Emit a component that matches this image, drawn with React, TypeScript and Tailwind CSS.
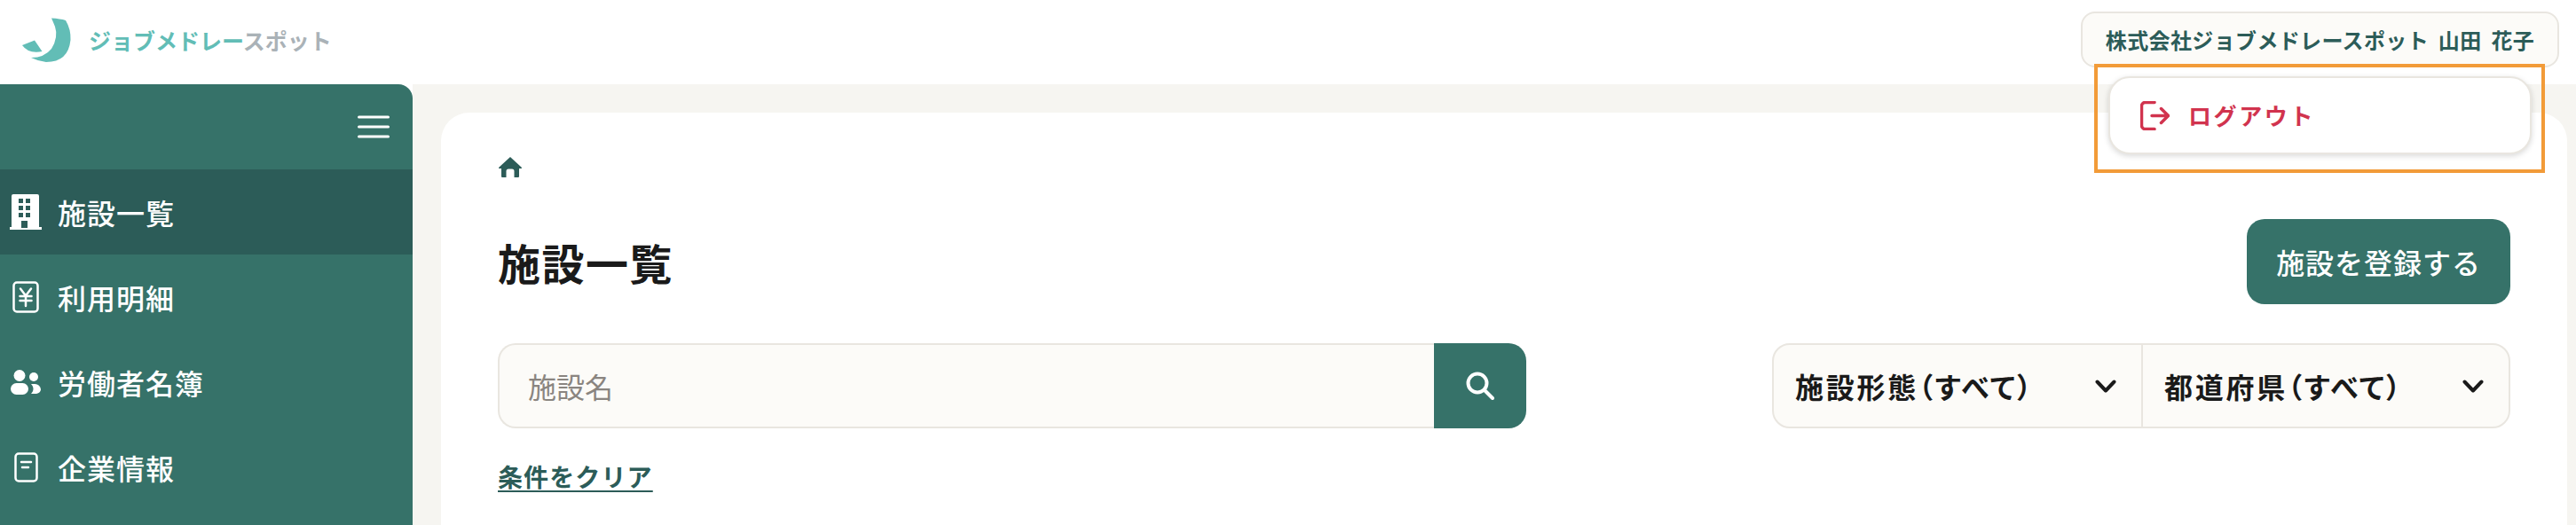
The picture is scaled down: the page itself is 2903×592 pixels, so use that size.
const font = "font-['Noto_Sans_CJK_JP','Liberation_Sans',sans-serif]"

function BuildingIcon() {
    return (
        <svg width="36" height="40" viewBox="0 0 36 40" fill="none">
            <path fillRule="evenodd" clipRule="evenodd" fill="#fff" d="M4 0h27a2 2 0 0 1 2 2v35h3v3H0v-3h2V2a2 2 0 0 1 2-2zM10 5v5h5V5zM18 5v5h5V5zM10 13v5h5v-5zM18 13v5h5v-5zM13 30v8h7v-8z" />
            <path fill="#2c5c58" d="M10 21h5v5h-5zM18 21h5v5h-5zM13 30h7v8h-7z" />
        </svg>
    )
}

function YenIcon() {
    return (
        <svg width="30" height="36" viewBox="0 0 30 36" fill="none" stroke="#fff" strokeWidth="2.500" strokeLinecap="round" strokeLinejoin="round">
            <rect x="1.500" y="1.500" width="27" height="33" rx="3.500" />
            <path d="M9 8.500l6 8 6-8M8.500 17h13M8.500 22h13M15 17v11" />
        </svg>
    )
}

function PeopleIcon() {
    return (
        <svg width="34" height="28" viewBox="0 0 34 28" fill="#fff">
            <circle cx="10" cy="6.500" r="6.500" />
            <circle cx="26" cy="8" r="5" />
            <rect x="0" y="15" width="20" height="13" rx="6.500" />
            <path d="M23 16h4.500a6.500 6.500 0 0 1 6.500 6c0 3-3 5-6.500 5H23c1.500-1.500 2.500-3.500 2.500-5.500s-1-4-2.500-5.500z" />
        </svg>
    )
}

function DocIcon() {
    return (
        <svg width="27" height="34" viewBox="0 0 27 34" fill="none" stroke="#fff" strokeWidth="2.500" strokeLinecap="round">
            <rect x="1.500" y="1.500" width="24" height="31" rx="3.500" />
            <path d="M8 11h11M9 17h7" />
        </svg>
    )
}

function NavItem({ icon, label, active }: { icon: React.ReactNode; label: string; active?: boolean }) {
    return (
        <div className={`h-[96px] flex items-center ${active ? 'bg-[#2c5c58]' : ''}`}>
            <div className="w-[58px] shrink-0 flex justify-center">{icon}</div>
            <span className="ml-[7px] text-[32px] leading-none tracking-[0.03em] font-medium text-white">{label}</span>
        </div>
    )
}

function Chevron() {
    return (
        <svg width="24" height="15" viewBox="0 0 24 15" fill="none" stroke="#1a1a1a" strokeWidth="4" strokeLinecap="round" strokeLinejoin="round">
            <path d="M2.500 2.500L12 12.500L21.500 2.500" />
        </svg>
    )
}

function FilterSelect({ label, className }: { label: string; className: string }) {
    return (
        <div className={`flex items-center justify-between ${className}`}>
            <span className="text-[32px] leading-none tracking-[0.085em] font-bold text-[#1a1a1a] [font-feature-settings:'palt']">{label}</span>
            <Chevron />
        </div>
    )
}

export default function App() {
    return (
        <div className={`${font} w-full h-[592px] overflow-hidden bg-white flex flex-col`}>
            <header className="h-[95px] shrink-0 bg-white flex justify-between">
                <div className="flex items-center pl-[25px] pb-[5px]">
                    <svg width="55" height="50" viewBox="25 20 55 50" fill="#62bdb6">
                        <path d="M58 20.500Q68 21 74 23Q80 33 79.500 45Q77 70 52 70Q43 69 35 65Q50 65 58 55Q66 42 62 30Q60 25 58 20.500Z" />
                        <path d="M25 51L39 45.500L47.500 58Q32 61 25 51Z" />
                    </svg>
                    <span className="ml-[20px] text-[25px] leading-none font-bold whitespace-nowrap">
                        <span className="text-[#62bdb6]">ジョブメドレー</span>
                        <span className="text-[#aab2b7]">スポット</span>
                    </span>
                </div>
                <div className="pt-[13px] pr-[19px]">
                    <div className="relative w-[539px] h-[63px] rounded-[16px] border-2 border-[#e9e6e0] bg-[#fcfbf8] flex items-center justify-center">
                        <span className="text-[24px] leading-none font-bold tracking-[0.015em] [word-spacing:5px] text-[#2c5c58] whitespace-nowrap">株式会社ジョブメドレースポット 山田 花子</span>
                        <div className="absolute z-10 left-[13px] top-[57px] w-[508px] h-[123px] border-[4px] border-[#f29b38] pl-[12px] pt-[10px]">
                            <div className="w-[477px] h-[88px] rounded-[24px] border-2 border-[#e9e6e0] bg-white shadow-[0_2px_6px_rgba(0,0,0,0.15)] flex items-center pl-[34px]">
                                <svg width="33" height="33" viewBox="0 0 33 33" fill="none" stroke="#d1334e" strokeWidth="3.500" strokeLinecap="round" strokeLinejoin="round">
                                    <path d="M16 1.500H6a4 4 0 0 0-4.500 4v22a4 4 0 0 0 4.500 4h10" />
                                    <path d="M13 16.500H31M23.500 8.500L31.500 16.500L23.500 24.500" />
                                </svg>
                                <span className="ml-[21px] text-[26px] leading-none font-bold tracking-[0.1em] text-[#d1334e]">ログアウト</span>
                            </div>
                        </div>
                    </div>
                </div>
            </header>

            <div className="flex-1 flex min-h-0">
                <aside className="w-[465px] shrink-0 bg-[#367269] rounded-tr-[16px]">
                    <div className="h-[96px] flex justify-end items-center pr-[26px]">
                        <svg width="36" height="26" viewBox="0 0 36 26" fill="none" stroke="#fff" strokeWidth="3" strokeLinecap="round">
                            <path d="M1.500 2h33M1.500 13h33M1.500 24h33" />
                        </svg>
                    </div>
                    <NavItem icon={<BuildingIcon />} label="施設一覧" active />
                    <NavItem icon={<YenIcon />} label="利用明細" />
                    <NavItem icon={<PeopleIcon />} label="労働者名簿" />
                    <NavItem icon={<DocIcon />} label="企業情報" />
                </aside>

                <main className="flex-1 min-w-0 bg-[#f6f5f1] pt-[32px] pl-[32px] pr-[10px]">
                    <div className="h-[600px] bg-white rounded-t-[32px] pt-[50px] px-[64px]">
                        <svg className="ml-[1px]" width="26" height="24" viewBox="0 0 26 24" fill="#2c5c58">
                            <path d="M13 0L25.500 11.500a.8.800 0 0 1-.5 1.500H23v9a1 1 0 0 1-1 1h-4.500v-7a2.500 2.500 0 0 0-2.500-2.500h-4A2.500 2.500 0 0 0 8.500 16v7H4a1 1 0 0 1-1-1v-9H1a.8.800 0 0 1-.5-1.500z" />
                        </svg>

                        <div className="mt-[46px] flex justify-between items-center">
                            <h1 className="text-[48px] leading-none font-bold tracking-[0.03em] text-[#1a1a1a]">施設一覧</h1>
                            <button className="w-[297px] h-[96px] rounded-[20px] bg-[#367269] text-white text-[32px] leading-none font-medium tracking-[0.03em]">施設を登録する</button>
                        </div>

                        <div className="mt-[44px] flex justify-between">
                            <div className="flex w-[1159px] h-[96px]">
                                <div className="flex-1 rounded-l-[20px] border-2 border-r-0 border-[#e9e6e0] bg-[#fcfbf8] flex items-center pl-[32px]">
                                    <span className="text-[32px] leading-none text-[#8a8580]">施設名</span>
                                </div>
                                <div className="w-[104px] rounded-r-[20px] bg-[#367269] flex items-center justify-center">
                                    <svg width="32" height="32" viewBox="0 0 32 32" fill="none" stroke="#fff" strokeWidth="4" strokeLinecap="round">
                                        <circle cx="13" cy="13" r="10.500" />
                                        <path d="M21 21L30 30" />
                                    </svg>
                                </div>
                            </div>
                            <div className="flex w-[832px] h-[96px] rounded-[20px] border-2 border-[#e9e6e0] bg-[#fcfbf8]">
                                <FilterSelect label="施設形態（すべて）" className="w-[416px] border-r-2 border-[#e9e6e0] pl-[24px] pr-[28px]" />
                                <FilterSelect label="都道府県（すべて）" className="flex-1 pl-[24px] pr-[28px]" />
                            </div>
                        </div>

                        <div className="mt-[38px]">
                            <span className="text-[28px] leading-[32px] font-bold tracking-[0.04em] text-[#2c5c58] underline underline-offset-[4px] decoration-2">条件をクリア</span>
                        </div>
                    </div>
                </main>
            </div>
        </div>
    )
}
